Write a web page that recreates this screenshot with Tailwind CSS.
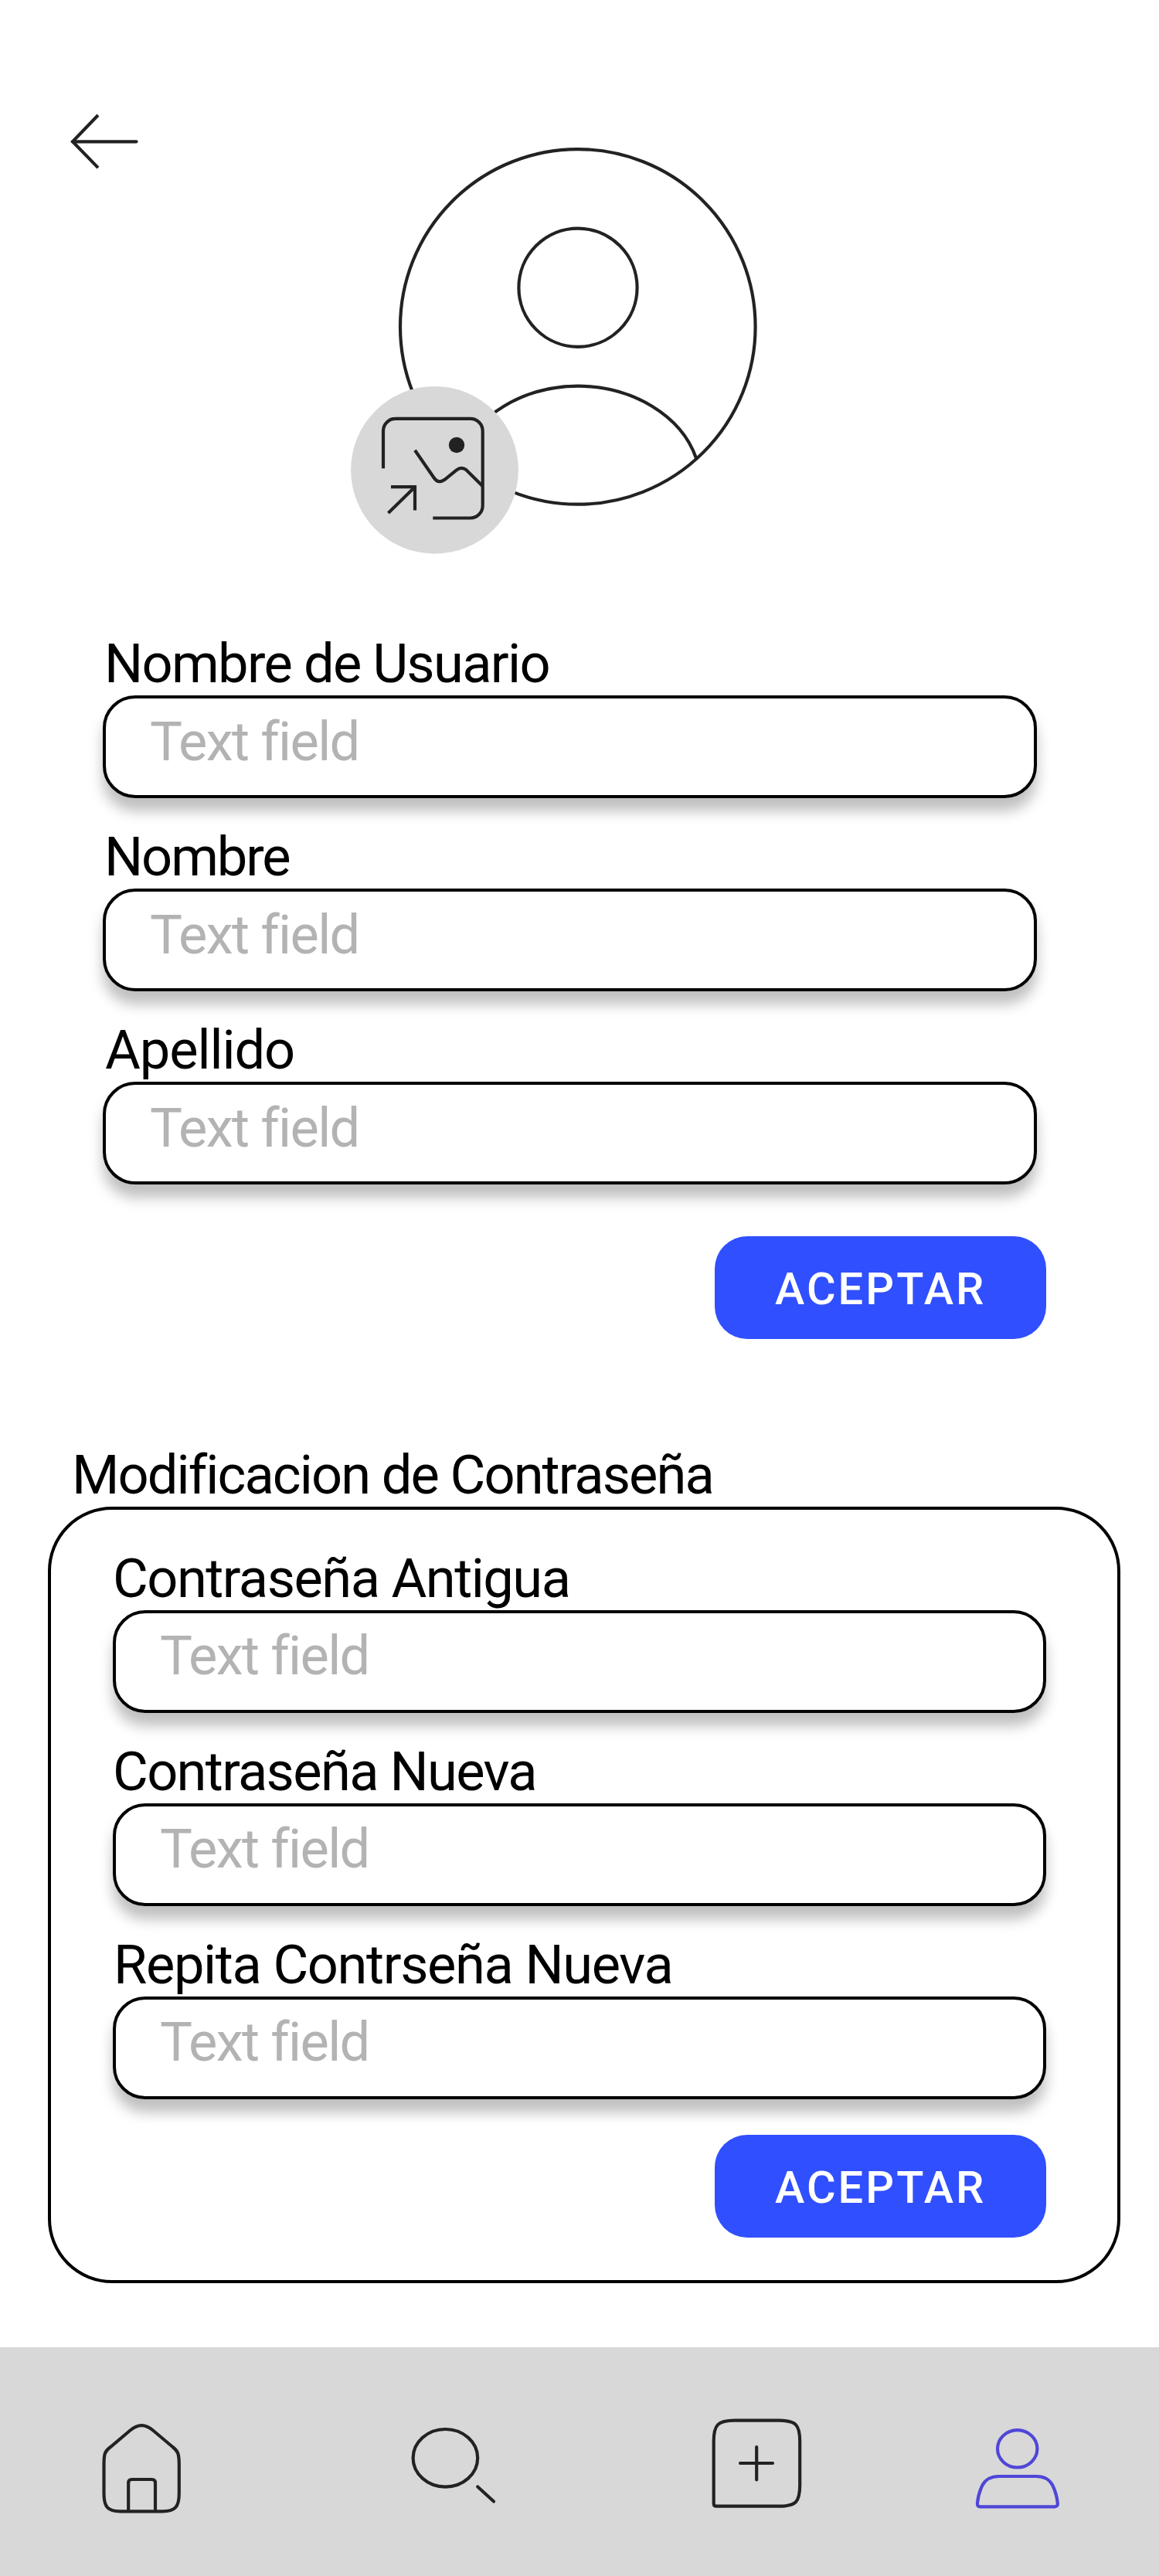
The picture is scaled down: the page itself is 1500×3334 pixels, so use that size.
<!DOCTYPE html>
<html lang="es">
<head>
<meta charset="utf-8">
<title>Editar perfil</title>
<script src="https://cdn.jsdelivr.net/npm/@tailwindcss/browser@4"></script>
</head>
<body class="bg-white">
<div class="w-[1500px] h-[3334px] flex flex-col bg-white font-['Roboto',sans-serif] text-black text-[70.4px] overflow-hidden whitespace-nowrap">

  <!-- Header: back arrow and avatar -->
  <header class="h-[820px] shrink-0 flex items-start">
    <a class="block ml-[80px] mt-[140px]">
      <svg class="w-[110px] h-[90px]" viewBox="80 140 110 90" fill="none" stroke="#222" stroke-width="4.17" stroke-linecap="round">
        <path d="M94 183.3H176.5"/>
        <path d="M125.5 150.5L94 183.3L125.5 215.6" stroke-linecap="square"/>
      </svg>
    </a>
    <div class="ml-[250px] mt-[180px]">
      <svg class="w-[560px] h-[550px]" viewBox="440 180 560 550" fill="none" stroke="#222" stroke-width="4.17">
        <circle cx="747.8" cy="422.9" r="229.8"/>
        <circle cx="748" cy="372.2" r="76.6"/>
        <path d="M595 593A160 127 0 0 1 748 499.6A160 127 0 0 1 901 593"/>
        <circle cx="562.5" cy="608.3" r="108.4" fill="#d8d8d8" stroke="none"/>
        <path d="M496 606.2V557.8a16 16 0 0 1 16-16h96.7a16 16 0 0 1 16 16V654.5a16 16 0 0 1-16 16H560.3"/>
        <circle cx="591" cy="576" r="10.2" fill="#222" stroke="none"/>
        <path d="M537 582.8L561.7 618.5C565.5 624 570 624.6 575.5 620.8L590.5 608.6C595 605 599.500 605 603.500 608.200L624.700 629.300"/>
        <path d="M506 630.200H537V660.600M502.500 664L537 630.200"/>
      </svg>
    </div>
  </header>

  <!-- Personal data -->
  <section class="h-[1050px] shrink-0 flex flex-col pl-[133px]">
    <div class="flex flex-col gap-[37px] w-[1209px]">
      <div>
        <div class="h-[80px] leading-[79px] pl-[2px] tracking-[-1.67px]">Nombre de Usuario</div>
        <div class="h-[133px] rounded-[42px] border-4 border-black bg-white shadow-[0_17px_17px_rgba(0,0,0,0.25)] pl-[57px] pt-4 leading-[80px] tracking-[-1.64px] text-[#b3b3b3]">Text field</div>
      </div>
      <div>
        <div class="h-[80px] leading-[79px] pl-[2px] tracking-[-2.1px]">Nombre</div>
        <div class="h-[133px] rounded-[42px] border-4 border-black bg-white shadow-[0_17px_17px_rgba(0,0,0,0.25)] pl-[57px] pt-4 leading-[80px] tracking-[-1.64px] text-[#b3b3b3]">Text field</div>
      </div>
      <div>
        <div class="h-[80px] leading-[79px] pl-[3px] tracking-[-1.12px]">Apellido</div>
        <div class="h-[133px] rounded-[42px] border-4 border-black bg-white shadow-[0_17px_17px_rgba(0,0,0,0.25)] pl-[57px] pt-4 leading-[80px] tracking-[-1.64px] text-[#b3b3b3]">Text field</div>
      </div>
    </div>
    <button class="mt-[67px] ml-[792px] w-[429px] h-[133px] rounded-[42px] bg-[#304ffe] text-white text-[57.7px] font-medium tracking-[3.06px] leading-[133px] pl-[78px] pt-[2px] text-left">ACEPTAR</button>
  </section>

  <!-- Password change -->
  <section class="h-[1168px] shrink-0 pl-[62px]">
    <div class="h-[80px] leading-[79px] pl-[31px] tracking-[-1.91px]">Modificacion de Contraseña</div>
    <div class="w-[1388px] h-[1005px] rounded-[83px] border-4 border-black bg-white pl-[80px] pt-[50px]">
      <div class="flex flex-col gap-[37px] w-[1208px]">
        <div>
          <div class="h-[80px] leading-[78px] tracking-[-1.5px]">Contraseña Antigua</div>
          <div class="h-[133px] rounded-[42px] border-4 border-black bg-white shadow-[0_17px_17px_rgba(0,0,0,0.25)] pl-[57px] pt-[15px] leading-[80px] tracking-[-1.64px] text-[#b3b3b3]">Text field</div>
        </div>
        <div>
          <div class="h-[80px] leading-[78px] tracking-[-1.67px]">Contraseña Nueva</div>
          <div class="h-[133px] rounded-[42px] border-4 border-black bg-white shadow-[0_17px_17px_rgba(0,0,0,0.25)] pl-[57px] pt-[15px] leading-[80px] tracking-[-1.64px] text-[#b3b3b3]">Text field</div>
        </div>
        <div>
          <div class="h-[80px] leading-[78px] pl-px tracking-[-1.39px]">Repita Contrseña Nueva</div>
          <div class="h-[133px] rounded-[42px] border-4 border-black bg-white shadow-[0_17px_17px_rgba(0,0,0,0.25)] pl-[57px] pt-[15px] leading-[80px] tracking-[-1.64px] text-[#b3b3b3]">Text field</div>
        </div>
      </div>
      <button class="block mt-[46px] ml-[779px] w-[429px] h-[133px] rounded-[42px] bg-[#304ffe] text-white text-[57.7px] font-medium tracking-[3.06px] leading-[133px] pl-[78px] pt-[2px] text-left">ACEPTAR</button>
    </div>
  </section>

  <!-- Bottom navigation -->
  <nav class="h-[296px] shrink-0 bg-[#d8d8d8] flex items-start pt-[82px] pl-[120px]">
    <a class="block w-[130px]">
      <svg class="w-[130px] h-[140px]" viewBox="120 3120 130 140" fill="none" stroke="#222" stroke-width="4.17">
        <path d="M134.500 3190C134.500 3176 135.500 3172.500 143 3167L168.500 3145.500C179 3137 187.500 3137 198 3145.500L223.500 3167C230.500 3172.500 231.800 3176 231.800 3190V3227C231.800 3245 226.500 3250.300 210 3250.300H156C139.500 3250.300 134.500 3245 134.500 3227Z"/>
        <path d="M166.200 3252V3213.500Q166.200 3209 170.700 3209H196.500Q201 3209 201 3213.500V3252"/>
      </svg>
    </a>
    <a class="block w-[130px] ml-[270px]">
      <svg class="w-[130px] h-[140px]" viewBox="520 3120 130 140" fill="none" stroke="#222" stroke-width="4.17" stroke-linecap="round">
        <ellipse cx="576.400" cy="3181.300" rx="41.800" ry="37.300"/>
        <path d="M618.200 3218.500L639 3237.500"/>
      </svg>
    </a>
    <a class="block w-[130px] ml-[260px]">
      <svg class="w-[130px] h-[140px]" viewBox="910 3120 130 140" fill="none" stroke="#222" stroke-width="4.17" stroke-linecap="round">
        <path d="M923.700 3160C923.700 3138 929 3132.700 951 3132.700H1008C1030 3132.700 1035.200 3138 1035.200 3160V3216C1035.200 3238.500 1030 3243.700 1008 3243.700H927.200Q923.700 3243.700 923.700 3240.200Z"/>
        <path d="M958 3188H1000M979.200 3167V3209.500"/>
      </svg>
    </a>
    <a class="block w-[130px] ml-[210px]">
      <svg class="w-[130px] h-[140px]" viewBox="1250 3120 130 140" fill="none" stroke="#4f46d8" stroke-width="4.17" stroke-linejoin="round">
        <ellipse cx="1316.700" cy="3169.300" rx="25.700" ry="24.200"/>
        <path d="M1293 3205H1341C1351.500 3205 1358.500 3209 1362.500 3217C1366 3224.500 1368 3231.500 1368.800 3240Q1369.200 3244.300 1365 3244.300H1268.800Q1264.600 3244.300 1264.900 3240C1265.600 3231.500 1267.700 3224.500 1271.200 3217C1275.200 3209 1282.500 3205 1293 3205Z"/>
      </svg>
    </a>
  </nav>
</div>
</body>
</html>
